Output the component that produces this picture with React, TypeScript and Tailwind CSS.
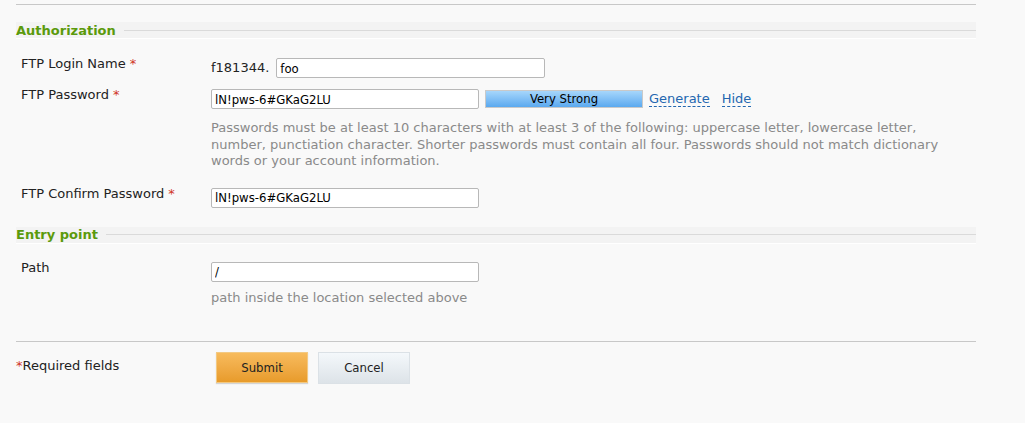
import React from 'react';

const font = { fontFamily: '"DejaVu Sans", Verdana, sans-serif' };
const condensed = { fontFamily: '"DejaVu Sans Condensed", "DejaVu Sans", sans-serif' };

function SectionHeader({ title }: { title: string }) {
  return (
    <div className="flex items-center h-[16px] bg-[#f3f3f3] border-b border-white box-content">
      <span className="text-[13px] font-bold text-[#5b9a0c] leading-none pr-2">{title}</span>
      <div className="flex-1 h-px bg-[#dadada]" />
    </div>
  );
}

function Req() {
  return <span className="text-[#d0341f] ml-1">*</span>;
}

function TextInput({ value, width }: { value: string; width: string }) {
  return (
    <input
      readOnly
      value={value}
      className={`${width} h-[20px] px-[3px] text-[13px] text-black bg-white border border-[#b8b8b8] rounded-[2px] outline-none`}
      style={condensed}
    />
  );
}

export default function App() {
  return (
    <div className="min-h-screen bg-[#f9f9f9] text-[13px] text-[#222]" style={font}>
      <div className="w-[960px] ml-4 pt-1">
        <div className="h-px bg-[#c8c8c8]" />

        <div className="mt-[17px]">
          <SectionHeader title="Authorization" />
        </div>

        <div className="mt-[19px] flex items-center pl-[5px]">
          <div className="w-[190px] self-start -mt-[4px]">FTP Login Name<Req /></div>
          <span className="mr-[7px]">f181344.</span>
          <TextInput value="foo" width="w-[269px]" />
        </div>

        <div className="mt-[11px] flex items-center pl-[5px]">
          <div className="w-[190px] self-start -mt-[4px]">FTP Password<Req /></div>
          <TextInput value="lN!pws-6#GKaG2LU" width="w-[268px]" />
          <div
            className="ml-[6px] w-[158px] h-[18px] border border-[#c9c9c9] bg-gradient-to-b from-[#a6d6fb] to-[#5aa9ef] flex items-center justify-center text-[13px] text-black"
            style={condensed}
          >
            Very Strong
          </div>
          <a className="ml-[6px] text-[#2467b0] border-b border-dashed border-[#2467b0] leading-[15px]">Generate</a>
          <a className="ml-[12px] text-[#2467b0] border-b border-dashed border-[#2467b0] leading-[15px]">Hide</a>
        </div>

        <div className="mt-[11px] ml-[195px] w-[740px] text-[13px] leading-[16.5px] text-[#8a8a8a]">
          Passwords must be at least 10 characters with at least 3 of the following: uppercase letter, lowercase letter,
          number, punctiation character. Shorter passwords must contain all four. Passwords should not match dictionary
          words or your account information.
        </div>

        <div className="mt-[18px] flex items-center pl-[5px]">
          <div className="w-[190px] self-start -mt-[4px]">FTP Confirm Password<Req /></div>
          <TextInput value="lN!pws-6#GKaG2LU" width="w-[268px]" />
        </div>

        <div className="mt-[19px]">
          <SectionHeader title="Entry point" />
        </div>

        <div className="mt-[18px] flex items-center pl-[5px]">
          <div className="w-[190px] self-start -mt-[4px]">Path</div>
          <TextInput value="/" width="w-[268px]" />
        </div>
        <div className="mt-[6px] ml-[195px] text-[13px] text-[#8a8a8a]">
          path inside the location selected above
        </div>

        <div className="mt-[34px] h-px bg-[#c8c8c8]" />

        <div className="mt-[10px] flex items-start">
          <div className="w-[200px] pt-[4px]">
            <span className="text-[#d0341f]">*</span>Required fields
          </div>
          <button
            className="w-[92px] h-[31px] border border-[#f3c982] bg-gradient-to-b from-[#f7bb5c] to-[#e89b2a] text-[13px] text-[#222] shadow-[0_1px_1px_rgba(0,0,0,0.15)]"
            style={condensed}
          >
            Submit
          </button>
          <button
            className="ml-[10px] w-[92px] h-[32px] border border-[#dbe1e6] bg-gradient-to-b from-[#f4f8fb] to-[#dde3e8] text-[13px] text-[#222]"
            style={condensed}
          >
            Cancel
          </button>
        </div>
      </div>
    </div>
  );
}
